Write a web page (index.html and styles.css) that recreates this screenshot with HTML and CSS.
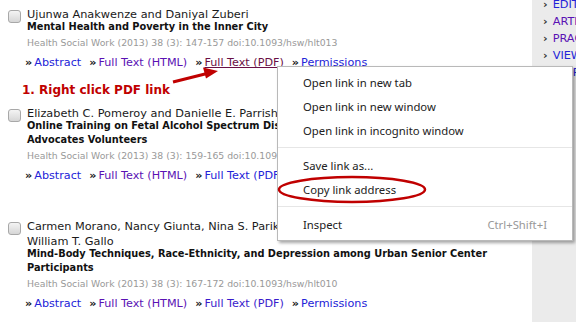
FILE: index.html
```html
<!DOCTYPE html>
<html lang="en">
<head>
    <meta charset="UTF-8">
    <title>Health Social Work - Table of Contents</title>
    <link rel="stylesheet" href="styles.css">
</head>
<body>
    <div class="page">
        <div class="main">
            <div class="item">
                <span class="check"></span>
                <div class="entry">
                    <div class="authors">Ujunwa Anakwenze and Daniyal Zuberi</div>
                    <div class="title">Mental Health and Poverty in the Inner City</div>
                    <div class="cite">Health Social Work (2013) 38 (3): 147-157 doi:10.1093/hsw/hlt013</div>
                    <div class="links">
                        <span class="sep">»</span><a class="link">Abstract</a>
                        <span class="sep">»</span><a class="link visited">Full Text (HTML)</a>
                        <span class="sep">»</span><a class="link hover">Full Text (PDF)</a>
                        <span class="sep">»</span><a class="link">Permissions</a>
                    </div>
                </div>
            </div>

            <div class="item">
                <span class="check"></span>
                <div class="entry">
                    <div class="authors">Elizabeth C. Pomeroy and Danielle E. Parrish</div>
                    <div class="title">Online Training on Fetal Alcohol Spectrum Disorders for Court Appointed Special Advocates Volunteers</div>
                    <div class="cite">Health Social Work (2013) 38 (3): 159-165 doi:10.1093/hsw/hlt011</div>
                    <div class="links">
                        <span class="sep">»</span><a class="link">Abstract</a>
                        <span class="sep">»</span><a class="link visited">Full Text (HTML)</a>
                        <span class="sep">»</span><a class="link">Full Text (PDF)</a>
                        <span class="sep">»</span><a class="link">Permissions</a>
                    </div>
                </div>
            </div>

            <div class="item">
                <span class="check"></span>
                <div class="entry">
                    <div class="authors">Carmen Morano, Nancy Giunta, Nina S. Parikh, Mary Ann Palumbo, Sara Okuyama and William T. Gallo</div>
                    <div class="title">Mind-Body Techniques, Race-Ethnicity, and Depression among Urban Senior Center Participants</div>
                    <div class="cite">Health Social Work (2013) 38 (3): 167-172 doi:10.1093/hsw/hlt010</div>
                    <div class="links">
                        <span class="sep">»</span><a class="link">Abstract</a>
                        <span class="sep">»</span><a class="link visited">Full Text (HTML)</a>
                        <span class="sep">»</span><a class="link pdf">Full Text (PDF)</a>
                        <span class="sep">»</span><a class="link">Permissions</a>
                    </div>
                </div>
            </div>
        </div>

        <div class="sidebar">
            <ul class="sections">
                <li><a class="link">EDITORIAL</a></li>
                <li><a class="link visited">ARTICLES</a></li>
                <li><a class="link visited">PRACTICE FORUM</a></li>
                <li><a class="link">VIEWPOINT</a></li>
                <li><a class="link">WORKS</a></li>
            </ul>
        </div>

        <!-- annotation layer drawn over the screenshot -->
        <div class="note note-one">1. Right click PDF link</div>
        <div class="note note-two">2.</div>
        <svg class="marks" width="576" height="322" viewBox="0 0 576 322">
            <line x1="173" y1="82" x2="207" y2="73.5" stroke="#c00000" stroke-width="3"/>
            <polygon points="218,71 203,67.5 206,78.5" fill="#c00000"/>
            <ellipse cx="352" cy="189.5" rx="73" ry="12.5" fill="none" stroke="#c00000" stroke-width="2.5"/>
        </svg>

        <div class="menu">
            <div class="menu-item">Open link in new tab</div>
            <div class="menu-item">Open link in new window</div>
            <div class="menu-item">Open link in incognito window</div>
            <div class="menu-sep"></div>
            <div class="menu-item">Save link as...</div>
            <div class="menu-item">Copy link address</div>
            <div class="menu-sep"></div>
            <div class="menu-item">Inspect<span class="shortcut">Ctrl+Shift+I</span></div>
        </div>
    </div>
</body>
</html>
```

FILE: styles.css
```css
* {
    margin: 0;
    padding: 0;
    box-sizing: border-box;
}
body {
    font-family: "DejaVu Sans", Verdana, sans-serif;
    color: #222;
    background-color: white;
    overflow: hidden;
}
.page {
    position: relative;
    width: 576px;
    height: 322px;
    display: flex;
    overflow: hidden;
}
.main {
    width: 532px;
    padding-top: 7px;
}
.item {
    display: flex;
    margin-bottom: 35px;
}
.check {
    flex: none;
    width: 13px;
    height: 13px;
    margin: 3px 6px 0 8px;
    border: 1px solid #a8a8a8;
    border-radius: 3px;
    background: linear-gradient(#f4f4f4, #d6d6d6);
}
.entry {
    width: 498px;
}
.authors {
    font-size: 11.3px;
    line-height: 15px;
    color: #1a1a1a;
}
.title {
    font-size: 9.8px;
    font-weight: bold;
    line-height: 14px;
    margin-top: -2px;
    color: #111;
}
.cite {
    font-size: 9.3px;
    line-height: 14px;
    margin-top: 2px;
    color: #999;
}
.links {
    display: flex;
    align-items: baseline;
    font-size: 11.2px;
    line-height: 16px;
    margin-top: 5px;
    margin-left: -2px;
}
.sep {
    font-weight: bold;
    color: #111;
    margin-right: 2px;
}
.link {
    color: #2323d8;
    margin-right: 8px;
}
.link.visited {
    color: #5a12b4;
}
.link.pdf {
    color: #3a1ccc;
}
.link.hover {
    color: #6a0f45;
    text-decoration: underline;
}
.sidebar {
    width: 44px;
    background-color: #ebebeb;
    overflow: hidden;
    white-space: nowrap;
}
.sections {
    list-style: none;
    margin-top: -4px;
    padding-left: 11px;
}
.sections li {
    font-size: 11.3px;
    line-height: 17px;
}
.sections li::before {
    content: "›";
    font-weight: bold;
    color: #333;
    margin-right: 5px;
}
.note {
    position: absolute;
    font-weight: bold;
    color: #c00000;
}
.note-one {
    left: 22px;
    top: 83px;
    font-size: 12px;
}
.note-two {
    left: 426px;
    top: 164px;
    font-size: 12px;
}
.marks {
    position: absolute;
    left: 0;
    top: 0;
    pointer-events: none;
    z-index: 2;
}
.menu {
    position: absolute;
    left: 277px;
    top: 66px;
    width: 296px;
    height: 175px;
    padding: 3px 0 5px;
    background-color: white;
    border: 1px solid #b9b9b9;
    box-shadow: 2px 2px 3px rgba(0, 0, 0, 0.35);
    font-family: "Noto Sans", "Open Sans", sans-serif;
    font-size: 11.3px;
    color: #222;
    z-index: 1;
}
.menu-item {
    display: flex;
    justify-content: space-between;
    align-items: center;
    height: 24px;
    padding: 0 25px 0 25px;
}
.shortcut {
    color: #999;
}
.menu-sep {
    height: 1px;
    margin: 5px 0;
    background-color: #e6e6e6;
}
```
